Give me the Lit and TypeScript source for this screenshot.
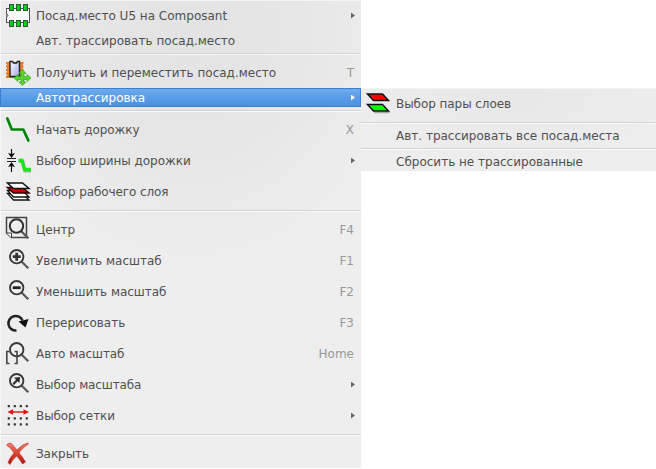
import { LitElement, html, css, svg, nothing, TemplateResult } from "lit";
import { customElement, property } from "lit/decorators.js";

const chipPads = [4, 11, 18];
const dots = [2.7, 8.7, 14.7, 20.7];

const lens = svg`<path d="M16.2 13.200L23.300 20.300" stroke="#5a5a5a" stroke-width="2.300"/><circle cx="11.700" cy="8.700" r="6.700" fill="#f4f4f4" fill-opacity=".6" stroke="#3a3a3a" stroke-width="1.900"/>`;

const icons: Record<string, TemplateResult> = {
  footprint: svg`<rect x="1.5" y="5.500" width="23" height="14" fill="#fff" stroke="#555"/><path d="M1.500 10.500q3 1.500 0 4" fill="#bbb" stroke="#555"/>
    ${chipPads.map((x) => svg`<rect x=${x + 0.5} y="1.500" width="4" height="6" fill="#00d018" stroke="#3f4f3f"/><rect x=${x + 0.5} y="17.500" width="4" height="6" fill="#00d018" stroke="#3f4f3f"/>`)}`,
  move: svg`<path d="M2 2H18V17.500H2Z" fill="#ef8733"/><path d="M1 3H18.500M1 6.500H18.500M1 10H18.500M1 13.500H18.500M1 17H18.500" stroke="#e87a20" stroke-width="1.800"/>
    <path d="M5 1.500H7.500L8.500 3H11.500L12.500 1.500H14.500V16.500H5Z" fill="url(#chip)" stroke="#222" stroke-width="1.400"/>
    <path d="M17.500 9.500L21 13.500H19V16.500H22V14.500L26 18L22 21.500V19.500H19V22H21L17.500 25.500L14 22H16V19.500H13V21.500L9 18L13 14.500V16.500H16V13.500H14Z" fill="#57d52c" stroke="#38a51d" stroke-width=".7"/>
    <defs><linearGradient id="chip" x2="1" y2="1"><stop stop-color="#fff"/><stop offset="1" stop-color="#a4a4ee"/></linearGradient></defs>`,
  track: svg`<path d="M2.300 1.500L6.800 12.500H18.300L23.300 23.500" fill="none" stroke="#00850a" stroke-width="2.700" stroke-linecap="round" stroke-linejoin="round"/>`,
  width: svg`<path d="M2 10.500H11M2 13.500H11" stroke="#222" stroke-width="1.200"/><path d="M6.500 1V7M6.500 17V24" stroke="#111" stroke-width="1.200"/><path d="M3 5L6.500 6L10 5L6.500 10ZM3 19L6.500 18L10 19L6.500 14Z" fill="#111"/>
    <path d="M14 13.500H18L20 23H26" fill="none" stroke="#aaa" stroke-width="3"/><path d="M13.500 12.500H17L19.500 21.500H26" fill="none" stroke="#19e619" stroke-width="3.300"/>`,
  layers: svg`${[14.5, 11.5].map((y) => svg`<path d=${`M2.500 ${y}H17.500L24 ${y + 6.5}H8.500Z`} fill="#fff" stroke="#111" stroke-width="1.300"/>`)}
    <path d="M2.500 8.500H17.500L24 14H8.500Z" fill="#c80000" stroke="#310000" stroke-width="1.500"/><path d="M2.500 4H17.500L24 9.500H8.500Z" fill="#fff" stroke="#111" stroke-width="1.500"/>`,
  center: svg`<path d="M1.500 .5H21.500V20.500H6.500L1.500 16Z" fill="#eee" stroke="#444" stroke-width="1.500"/><path d="M1.500 16H6.500V20.500" fill="#fff" stroke="#3a3a3a"/><path d="M15.500 13.500L23.300 21.300" stroke="#555" stroke-width="2.200"/><circle cx="11.500" cy="9" r="6.700" fill="#eee" stroke="#303030" stroke-width="2"/>`,
  plus: svg`${lens}<path d="M7.700 8.700H15.700M11.700 4.700V12.700" stroke="#333" stroke-width="2.800"/>`,
  minus: svg`${lens}<path d="M7.700 8.700H15.700" stroke="#222" stroke-width="2.800"/>`,
  redraw: svg`<path d="M11.500 20.500A7.300 7.300 0 1 1 17.500 10.500" fill="none" stroke="#222" stroke-width="2.500"/><path d="M13.500 11.500L23.500 9L20.500 17.500Z" fill="#111"/>`,
  auto: svg`${lens}<path d="M4.500 10.500H1.800V22.500H4.500M9.500 10.500H12V22.500H9.500" fill="none" stroke="#444" stroke-width="1.600"/>`,
  zoom: svg`${lens}<path d="M8.200 12.200L12.500 7.900" stroke="#333" stroke-width="2.200"/><path d="M9 5.700L15 4.900L14.500 11Z" fill="#2a2a2a"/>`,
  grid: svg`${[2, 14.3, 20.3].map((y) => dots.map((x) => svg`<rect x=${x} y=${y} width="2.200" height="2.200" rx=".5" fill="#333"/>`))}<path d="M5 9H21" stroke="#e01010" stroke-width="1.400"/><path d="M2.500 9L8 6.300V11.700ZM24 9L18.500 6.300V11.700Z" fill="#e01010"/>`,
  close: svg`<path d="M1.500 4Q4 1 6.500 2.500L12 9Q17 3 23 2L23.500 3Q17 7 14 12Q17 15 20.500 21L17.500 23Q14 17 11.500 15Q7 19 5 23.500L3 21.500Q5 16 9 12Q6 7 1.500 4Z" fill="url(#red)" stroke="#c22f20" stroke-width=".6"/>
    <defs><linearGradient id="red" x2="0" y2="1"><stop stop-color="#f08070"/><stop offset=".5" stop-color="#d84030"/><stop offset="1" stop-color="#b01004"/></linearGradient></defs>`,
  pair: svg`<path d="M9 21.500H24.500" stroke="#aaa" stroke-width="1.500"/><path d="M2.500 3H17.500L23.500 9.500H8.500Z" fill="#f00" stroke="#111" stroke-width="1.500"/><path d="M2.500 13.500H17.500L23.500 20H8.500Z" fill="#0f0" stroke="#111" stroke-width="1.500"/>`,
};

interface Item {
  label: string;
  icon?: string;
  key?: string;
  sub?: boolean;
  active?: boolean;
  /** Change of the label's total width, in pixels. */
  tighten?: number;
}

const mainItems: (Item | null)[] = [
  { label: "Посад.место U5 на Composant", icon: "footprint", sub: true },
  { label: "Авт. трассировать посад.место", tighten: -0.5 },
  null,
  { label: "Получить и переместить посад.место", icon: "move", key: "T" },
  { label: "Автотрассировка", sub: true, active: true },
  null,
  { label: "Начать дорожку", icon: "track", key: "X", tighten: 1 },
  { label: "Выбор ширины дорожки", icon: "width", sub: true, tighten: 1 },
  { label: "Выбор рабочего слоя", icon: "layers", tighten: 2 },
  null,
  { label: "Центр", icon: "center", key: "F4" },
  { label: "Увеличить масштаб", icon: "plus", key: "F1" },
  { label: "Уменьшить масштаб", icon: "minus", key: "F2", tighten: 0.7 },
  { label: "Перерисовать", icon: "redraw", key: "F3" },
  { label: "Авто масштаб", icon: "auto", key: "Home", tighten: 0.7 },
  { label: "Выбор масштаба", icon: "zoom", sub: true, tighten: 1.7 },
  { label: "Выбор сетки", icon: "grid", sub: true, tighten: 1 },
  null,
  { label: "Закрыть", icon: "close", tighten: 0.5 },
];

const subItems: (Item | null)[] = [
  { label: "Выбор пары слоев", icon: "pair", tighten: 1 },
  null,
  { label: "Авт. трассировать все посад.места" },
  null,
  { label: "Сбросить не трассированные" },
];

@customElement("popup-menu")
class PopupMenu extends LitElement {
  @property({ attribute: false }) items: (Item | null)[] = [];

  static styles = css`
    :host {
      display: block;
      box-sizing: border-box;
      border-left: 1px solid #f6f6f6;
      background: #ededed;
      box-shadow: inset 0 1px #f4f4f4;
    }
    .row {
      display: flex;
      align-items: center;
      box-sizing: border-box;
      height: 19px;
      padding-right: 6px;
      color: #505050;
    }
    .row.tall {
      height: 31px;
    }
    .row.active {
      margin-left: -1px;
      padding: 0 5px 0 0;
      border: 1px solid #3b7fd0;
      background: linear-gradient(#6faaee, #5a9de6 50%, #4b91df);
      color: #fff;
    }
    .icon {
      flex: none;
      width: 26px;
      height: 26px;
      margin: 0 5px 0 4px;
    }
    .icon svg {
      display: block;
      overflow: visible;
    }
    .label,
    .key {
      padding-top: 2px;
    }
    .label {
      flex: 1;
      white-space: pre;
    }
    .key {
      color: #999;
      padding-right: 1px;
    }
    .arrow {
      width: 4px;
      height: 6px;
      background: #6a6a6a;
      clip-path: polygon(0 0, 100% 50%, 0 100%);
    }
    .active .arrow {
      background: #fff;
    }
    .line {
      height: 1px;
      margin: 3px 0;
      background: #d3d3d3;
      box-shadow: 0 1px #fafafa;
    }
  `;

  render() {
    return this.items.map((item) =>
      item
        ? html`<div class="row ${item.icon ? "tall" : ""} ${item.active ? "active" : ""}">
            <span class="icon">${item.icon ? html`<svg width="26" height="26" viewBox="0 0 26 26">${icons[item.icon]}</svg>` : nothing}</span>
            <span class="label" style="letter-spacing:${(-(item.tighten ?? 0) / item.label.length).toFixed(3)}px">${item.label}</span>
            ${item.key ? html`<span class="key">${item.key}</span>` : nothing}
            ${item.sub ? html`<span class="arrow"></span>` : nothing}
          </div>`
        : html`<div class="line"></div>`
    );
  }
}

@customElement("app-root")
class AppRoot extends LitElement {
  static styles = css`
    :host {
      display: flex;
      align-items: flex-start;
      width: 656px;
      height: 469px;
      overflow: hidden;
      background: #fff;
      font: 12px/15px "DejaVu Sans", sans-serif;
    }
    .main {
      width: 361px;
      height: 468px;
      background: radial-gradient(ellipse 220px 240px at 190px 30px, #e3e3e3, #e6e6e6 50%, #eeeeee);
    }
    .sub {
      width: 295px;
      margin-top: 88px;
      border-left: 0;
      background: radial-gradient(ellipse 180px 70px at 150px 10px, #e7e7e7, #eeeeee);
    }
  `;

  render() {
    return html`<popup-menu class="main" .items=${mainItems}></popup-menu>
      <popup-menu class="sub" .items=${subItems}></popup-menu>`;
  }
}
